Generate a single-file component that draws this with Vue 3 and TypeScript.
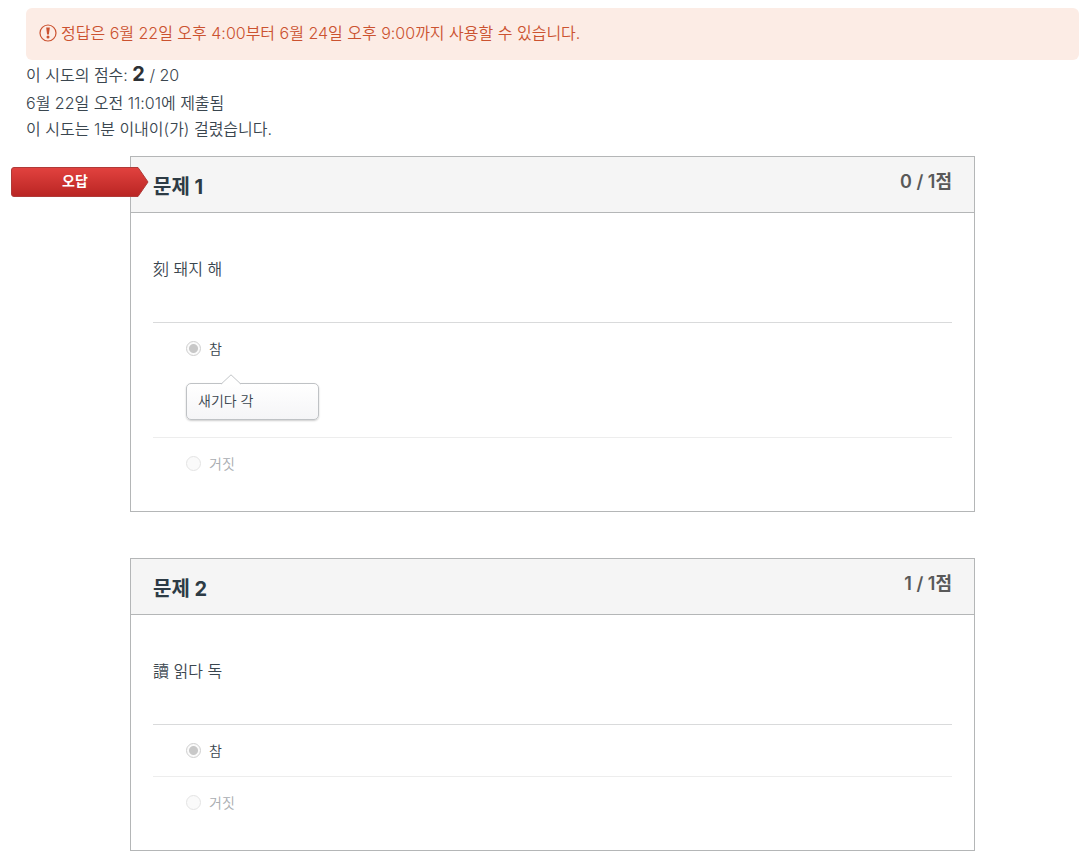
<script setup lang="ts">
interface Answer {
  id: string
  label: string
  selected: boolean
  comment?: string
}

interface Question {
  id: number
  title: string
  points: string
  text: string
  incorrect: boolean
  answers: Answer[]
}

const questions: Question[] = [
  {
    id: 1,
    title: '문제 1',
    points: '0 / 1점',
    text: '刻 돼지 해',
    incorrect: true,
    answers: [
      { id: 'q1-true', label: '참', selected: true, comment: '새기다 각' },
      { id: 'q1-false', label: '거짓', selected: false },
    ],
  },
  {
    id: 2,
    title: '문제 2',
    points: '1 / 1점',
    text: '讀 읽다 독',
    incorrect: false,
    answers: [
      { id: 'q2-true', label: '참', selected: true },
      { id: 'q2-false', label: '거짓', selected: false },
    ],
  },
]
</script>

<template>
  <main class="page">
    <div class="alert" role="status">
      <svg class="alert-icon" viewBox="0 0 18 18" aria-hidden="true">
        <circle cx="9" cy="9" r="8" fill="none" stroke="currentColor" stroke-width="1.2" />
        <path d="M7.2 3.6h3.6l-.9 6.8H8.1z" fill="currentColor" />
        <circle cx="9" cy="12.9" r="1.5" fill="currentColor" />
      </svg>
      <span>정답은 6월 22일 오후 4:00부터 6월 24일 오후 9:00까지 사용할 수 있습니다.</span>
    </div>

    <div class="summary">
      <p class="score">이 시도의 점수: <strong>2</strong> / 20</p>
      <p>6월 22일 오전 11:01에 제출됨</p>
      <p>이 시도는 1분 이내이(가) 걸렸습니다.</p>
    </div>

    <div class="questions">
      <section v-for="q in questions" :key="q.id" class="question">
        <div v-if="q.incorrect" class="flag">
          <svg class="flag-shape" viewBox="0 0 138 30" aria-hidden="true">
            <defs>
              <linearGradient id="flag-fill" x1="0" y1="0" x2="0" y2="1">
                <stop offset="0" stop-color="#e2423f" />
                <stop offset="1" stop-color="#b92523" />
              </linearGradient>
            </defs>
            <path
              d="M3 .5H127L137 15 127 29.5H3Q.5 29.5 .5 27V3Q.5 .5 3 .5Z"
              fill="url(#flag-fill)"
              stroke="#b03a38"
            />
          </svg>
          <span class="flag-text">오답</span>
        </div>
        <header class="question-head">
          <h2>{{ q.title }}</h2>
          <span class="points">{{ q.points }}</span>
        </header>
        <div class="question-body">
          <p class="question-text">{{ q.text }}</p>
          <div class="answers" role="radiogroup" :aria-label="q.title">
            <div
              v-for="a in q.answers"
              :key="a.id"
              class="answer"
              :class="{ dimmed: !a.selected }"
            >
              <div class="choice">
                <input :id="a.id" type="radio" :name="`q${q.id}`" :checked="a.selected" disabled />
                <label :for="a.id">{{ a.label }}</label>
              </div>
              <div v-if="a.comment" class="comment">
                <svg class="comment-tip" viewBox="0 0 20 11" aria-hidden="true">
                  <path d="M0 10.5 10 .8 20 10.5V11H0Z" fill="#fff" />
                  <path d="M0 10.2 10 .8 20 10.2" fill="none" stroke="#c2c5c8" />
                </svg>
                {{ a.comment }}
              </div>
            </div>
          </div>
        </div>
      </section>
    </div>
  </main>
</template>

<style>
body {
  margin: 0;
  background: #fff;
}
</style>

<style scoped>
.page {
  padding: 8px 7px 16px 26px;
  color: #3a464f;
  font-family: Inter, "Noto Sans CJK KR", sans-serif;
  font-size: 16px;
  font-weight: 350;
  line-height: 26px;
}

p,
h2 {
  margin: 0;
}

.alert {
  display: flex;
  align-items: center;
  gap: 4px;
  padding: 12px 13px 14px;
  border-radius: 6px;
  background: #fcece5;
  color: #cb5230;
}

.alert-icon {
  flex: none;
  width: 18px;
  height: 18px;
}

.summary {
  padding-bottom: 14px;
}

.score {
  line-height: 29px;
}

.score strong {
  color: #2d3135;
  font-size: 20px;
  font-weight: 700;
}

.questions {
  display: flex;
  flex-direction: column;
  gap: 46px;
  margin: 0 104px;
}

.question {
  position: relative;
  border: 1px solid #b4b6b7;
}

.flag {
  position: absolute;
  top: 10px;
  left: -120px;
  width: 138px;
  height: 30px;
}

.flag-shape {
  display: block;
  width: 100%;
  height: 100%;
}

.flag-text {
  position: absolute;
  inset: 0 10px 0 0;
  color: #fff;
  font-size: 14px;
  font-weight: 700;
  line-height: 28px;
  text-align: center;
}

.question-head {
  display: flex;
  justify-content: space-between;
  align-items: flex-start;
  padding: 13px 22px 12px;
  border-bottom: 1px solid #b4b6b7;
  background: #f5f5f5;
}

.question-head h2 {
  padding-top: 4px;
  color: #2d3b45;
  font-size: 20px;
  font-weight: 700;
  line-height: 26px;
}

.points {
  color: #595959;
  font-size: 18px;
  font-weight: 600;
  line-height: 24px;
}

.question-body {
  padding: 43px 22px 22px;
}

.question-text {
  padding-bottom: 40px;
}

.answer {
  padding-left: 33px;
  border-top: 1px solid #ededed;
}

.answer:first-child {
  border-top-color: #d9dadb;
}

.choice {
  display: flex;
  align-items: center;
  gap: 8px;
  height: 51px;
  font-size: 14px;
}

.choice input {
  appearance: none;
  box-sizing: border-box;
  width: 15px;
  height: 15px;
  margin: 0;
  border: 1px solid #cfcfcf;
  border-radius: 50%;
  background: #fafafa;
}

.choice input:checked {
  background: radial-gradient(circle, #c8c8c8 0 4px, #fafafa 5px);
}

.dimmed .choice {
  color: #a9adb1;
}

.dimmed .choice input {
  border-color: #e4e4e4;
}

.comment {
  position: relative;
  box-sizing: border-box;
  width: 133px;
  margin: 9px 0 17px;
  padding: 4px 11px 5px;
  border: 1px solid #bfc2c5;
  border-radius: 5px;
  background: linear-gradient(#fff, #f5f5f7);
  box-shadow: 0 1px 2px #00000033;
  font-size: 14px;
}

.comment-tip {
  position: absolute;
  top: -10px;
  left: 34px;
  width: 20px;
  height: 11px;
}
</style>
